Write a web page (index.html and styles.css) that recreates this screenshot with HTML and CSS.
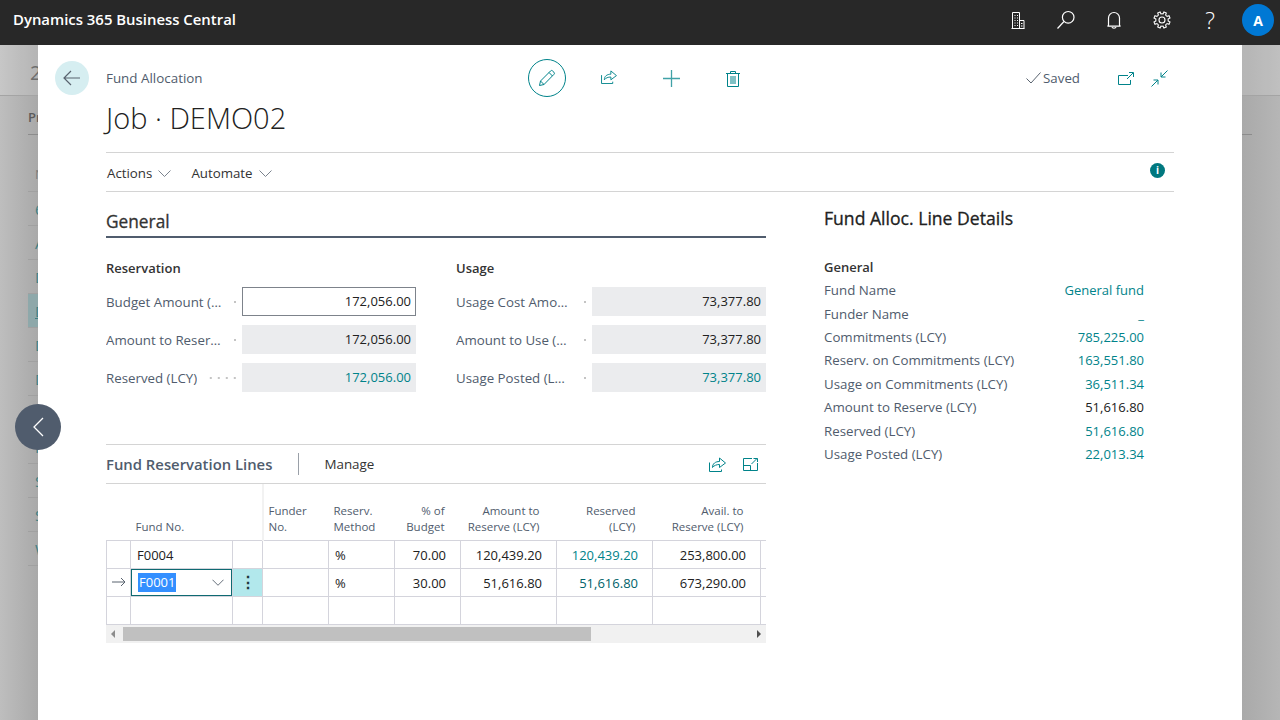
FILE: index.html
```html
<!DOCTYPE html>
<html lang="en">
<head>
<meta charset="utf-8">
<title>Job · DEMO02 - Dynamics 365 Business Central</title>
<link rel="stylesheet" href="styles.css">
</head>
<body>
<header class="topbar">
  <div class="brand">Dynamics 365 Business Central</div>
  <nav class="top-icons">
    <span class="top-btn"><svg width="14" height="17" viewBox="0 0 14 17" fill="none" stroke="#fff"><path d="M1.500 16.500V.5h7v16zM8.500 8.500h4.500v8H8.500M.5 16.500h13"/><path d="M3.500 3.500h1M6 3.500h1M3.500 6h1M6 6h1M3.500 8.500h1M6 8.500h1M3.500 11h1M6 11h1M3.500 13.500h1M6 13.500h1M10 11.500h1.500M10 14h1.500"/></svg></span>
    <span class="top-btn"><svg width="20" height="20" viewBox="0 0 20 20" fill="none" stroke="#fff" stroke-width="1.200"><circle cx="12.200" cy="7.300" r="5.800"/><path d="M8 11.500 1.500 18.500"/></svg></span>
    <span class="top-btn"><svg width="18" height="20" viewBox="0 0 18 20" fill="none" stroke="#fff" stroke-width="1.200"><path d="M3.500 15V8a5.500 5.500 0 0 1 11 0v7c0 .6.5 1 1 1.200H2.500c.5-.2 1-.6 1-1.200zM7 17c.3 1.500 3.700 1.500 4 0"/></svg></span>
    <span class="top-btn"><svg width="20" height="20" viewBox="-10 -10 20 20" fill="none" stroke="#fff" stroke-width="1.100"><defs><path id="gear-tooth" d="M5.730-2.370 6.040-1.390 8.100-1.280V1.280L6.040 1.390 5.730 2.370"/></defs><use href="#gear-tooth" transform="rotate(22.500)"/><use href="#gear-tooth" transform="rotate(67.500)"/><use href="#gear-tooth" transform="rotate(112.500)"/><use href="#gear-tooth" transform="rotate(157.500)"/><use href="#gear-tooth" transform="rotate(202.500)"/><use href="#gear-tooth" transform="rotate(247.500)"/><use href="#gear-tooth" transform="rotate(292.500)"/><use href="#gear-tooth" transform="rotate(337.500)"/><circle r="3"/></svg></span>
    <span class="top-btn help">?</span>
    <span class="avatar">A</span>
  </nav>
</header>

<main class="workspace">
  <div class="backdrop">
    <div class="bg-title">2</div>
    <div class="bg-list">
      <div class="bg-tab">Projects</div>
      <div class="bg-row bg-head">No.</div>
      <div class="bg-row">6000</div>
      <div class="bg-row">AMT</div>
      <div class="bg-row">DEMO</div>
      <div class="bg-row bg-selected">DEMO02</div>
      <div class="bg-row">DEMO03</div>
      <div class="bg-row">DEMO04</div>
      <div class="bg-row">DEMO05</div>
      <div class="bg-row">F1000</div>
      <div class="bg-row">S1000</div>
      <div class="bg-row">S2000</div>
      <div class="bg-row">W1000</div>
    </div>
  </div>

  <section class="dialog">
    <div class="dialog-head">
      <span class="back-btn"><svg width="18" height="16" viewBox="0 0 18 16" fill="none" stroke="#59636f" stroke-width="1.200"><path d="M17 8H1M8 1 1 8l7 7"/></svg></span>
      <span class="caption">Fund Allocation</span>
      <div class="tools">
        <span class="tool tool-edit"><svg width="20" height="20" viewBox="0 0 20 20" fill="none" stroke="#00838a"><path d="M2.500 17.500 3.500 13 13.500 3a1.500 1.500 0 0 1 2.200 0l1.200 1.200a1.500 1.500 0 0 1 0 2.200L7 16.500zM3.500 13 7 16.500M12 4.500 15.500 8"/></svg></span>
        <span class="tool tool-up"><svg width="16" height="14" viewBox="0 0 17 15" fill="none" stroke="#00838a"><path d="M.5 5.500v9h12v-2"/><path d="M3.500 10.500c0-4 3-6 7-6V1l6 5-6 4.500V7.500c-3 0-5.500 1-7 3z" stroke-linejoin="round"/></svg></span>
        <span class="tool"><svg width="17" height="17" viewBox="0 0 17 17" fill="none" stroke="#00838a" stroke-opacity=".75" stroke-width="1.300"><path d="M8.500 0v17M0 8.500h17"/></svg></span>
        <span class="tool"><svg width="14" height="17" viewBox="0 0 14 17" fill="none" stroke="#00838a"><path d="M0 3.500h14M1.500 3.500v13h11v-13M4.500 3.500v-2h5v2M5 6v8M7 6v8M9 6v8"/></svg></span>
      </div>
      <div class="status">
        <span class="saved"><svg width="15" height="12" viewBox="0 0 15 12" fill="none" stroke="#59636f"><path d="M.5 6.500 5 11 14.500.5"/></svg>Saved</span>
        <span class="status-icon"><svg width="16" height="13" viewBox="0 0 16 13" fill="none" stroke="#00838a"><path d="M10 3.500H.500v9h12V8"/><path d="M9 7 15 1M11 .5h4.500V5" stroke-width="1"/></svg></span>
        <span class="status-icon"><svg width="17" height="17" viewBox="0 0 17 17" fill="none" stroke="#00838a"><path d="M16.500.5 10 7M10 2.500V7h4.500M.5 16.500 7 10M2.500 10H7v4.500"/></svg></span>
      </div>
    </div>
    <h1 class="page-title">Job · DEMO02</h1>
    <div class="menu">
      <span class="menu-item">Actions<svg class="chev" width="13" height="7" viewBox="0 0 13 7" fill="none" stroke="#7b838e"><path d="m.5.5 6 6 6-6"/></svg></span>
      <span class="menu-item">Automate<svg class="chev" width="13" height="7" viewBox="0 0 13 7" fill="none" stroke="#7b838e"><path d="m.5.5 6 6 6-6"/></svg></span>
      <span class="info">i</span>
    </div>

    <div class="content">
      <div class="main-col">
        <h2 class="section-title">General</h2>
        <div class="field-groups">
          <div class="field-group">
            <h3 class="group-title">Reservation</h3>
            <div class="field"><span class="f-label"><span class="f-text">Budget Amount (LCY)</span><i class="leader"></i></span><span class="f-value f-input">172,056.00</span></div>
            <div class="field"><span class="f-label"><span class="f-text">Amount to Reserve (LCY)</span><i class="leader"></i></span><span class="f-value">172,056.00</span></div>
            <div class="field"><span class="f-label"><span class="f-text">Reserved (LCY)</span><i class="leader"></i></span><span class="f-value link">172,056.00</span></div>
          </div>
          <div class="field-group">
            <h3 class="group-title">Usage</h3>
            <div class="field"><span class="f-label"><span class="f-text">Usage Cost Amount (LCY)</span><i class="leader"></i></span><span class="f-value">73,377.80</span></div>
            <div class="field"><span class="f-label"><span class="f-text">Amount to Use (LCY)</span><i class="leader"></i></span><span class="f-value">73,377.80</span></div>
            <div class="field"><span class="f-label"><span class="f-text">Usage Posted (LCY)</span><i class="leader"></i></span><span class="f-value link">73,377.80</span></div>
          </div>
        </div>

        <div class="lines">
          <div class="lines-head">
            <span class="lines-title">Fund Reservation Lines</span>
            <span class="lines-manage">Manage</span>
            <span class="lines-icons">
              <svg width="17" height="15" viewBox="0 0 17 15" fill="none" stroke="#00838a"><path d="M.5 5.500v9h12v-2"/><path d="M3.500 10.500c0-4 3-6 7-6V1l6 5-6 4.500V7.500c-3 0-5.500 1-7 3z" stroke-linejoin="round"/></svg>
              <svg width="15" height="13" viewBox="0 0 15 13" fill="none" stroke="#00838a"><path d="M9 .5H.5v12h14V5M.5 7.500h7v5M8.500 6 14 .5M10.500.5h4V4"/></svg>
            </span>
          </div>
          <table class="grid">
            <colgroup>
              <col class="c-mark"><col class="c-fund"><col class="c-menu"><col class="c-narrow"><col class="c-narrow"><col class="c-narrow"><col class="c-amt"><col class="c-amt"><col class="c-avail"><col>
            </colgroup>
            <thead>
              <tr>
                <th></th><th class="th-left">Fund No.</th><th class="th-sep"></th>
                <th class="th-left">Funder<br>No.</th><th class="th-left">Reserv.<br>Method</th>
                <th>% of<br>Budget</th><th>Amount to<br>Reserve (LCY)</th><th>Reserved<br>(LCY)</th><th>Avail. to<br>Reserve (LCY)</th><th class="th-end"></th>
              </tr>
            </thead>
            <tbody>
              <tr><td></td><td class="left">F0004</td><td></td><td></td><td class="left">%</td><td>70.00</td><td>120,439.20</td><td class="link">120,439.20</td><td>253,800.00</td><td></td></tr>
              <tr>
                <td class="mark"><svg width="14" height="10" viewBox="0 0 14 10" fill="none" stroke="#59636f"><path d="M0 5h13M9 1l4 4-4 4"/></svg></td>
                <td class="active"><span class="combo"><span class="selected-text">F0001</span><svg width="12" height="7" viewBox="0 0 13 7" fill="none" stroke="#59636f"><path d="m.5.5 6 6 6-6"/></svg></span></td>
                <td class="row-menu">⋮</td><td></td><td class="left">%</td><td>30.00</td><td>51,616.80</td><td class="link-dark">51,616.80</td><td>673,290.00</td><td></td>
              </tr>
              <tr><td></td><td></td><td></td><td></td><td></td><td></td><td></td><td></td><td></td><td></td></tr>
            </tbody>
          </table>
          <div class="scrollbar">
            <span class="sb-arrow sb-left"></span>
            <span class="sb-track"><span class="sb-thumb"></span></span>
            <span class="sb-arrow sb-right"></span>
          </div>
        </div>
      </div>

      <aside class="side-col">
        <h2 class="side-title">Fund Alloc. Line Details</h2>
        <h3 class="side-group">General</h3>
        <dl class="facts">
          <div class="fact"><dt>Fund Name</dt><dd class="link">General fund</dd></div>
          <div class="fact"><dt>Funder Name</dt><dd class="link">_</dd></div>
          <div class="fact"><dt>Commitments (LCY)</dt><dd class="link">785,225.00</dd></div>
          <div class="fact"><dt>Reserv. on Commitments (LCY)</dt><dd class="link">163,551.80</dd></div>
          <div class="fact"><dt>Usage on Commitments (LCY)</dt><dd class="link">36,511.34</dd></div>
          <div class="fact"><dt>Amount to Reserve (LCY)</dt><dd>51,616.80</dd></div>
          <div class="fact"><dt>Reserved (LCY)</dt><dd class="link">51,616.80</dd></div>
          <div class="fact"><dt>Usage Posted (LCY)</dt><dd class="link">22,013.34</dd></div>
        </dl>
      </aside>
    </div>
  </section>

  <span class="panel-toggle"><svg width="12" height="20" viewBox="0 0 12 20" fill="none" stroke="#fff" stroke-width="1.300"><path d="M11 1 2 10l9 9"/></svg></span>
</main>
</body>
</html>
```
FILE: styles.css
```css
* { box-sizing: border-box; }
html, body { height: 100%; }
body {
  margin: 0;
  width: 1280px;
  height: 720px;
  overflow: hidden;
  display: flex;
  flex-direction: column;
  font-family: "Open Sans", "Noto Sans", sans-serif;
  font-size: 13px;
  color: #212121;
  background: #fff;
}
h1, h2, h3, dl, dd { margin: 0; font-weight: normal; }

/* top bar */
.topbar {
  flex: none;
  height: 45px;
  background: #282828;
  color: #fff;
  display: flex;
  align-items: center;
  justify-content: space-between;
  padding: 0 6px 5px 13px;
}
.brand { font-size: 14.900px; font-weight: 600; line-height: 38px; height: 40px; }
.top-icons { display: flex; align-items: center; height: 40px; }
.top-btn { width: 48px; height: 40px; display: flex; align-items: center; justify-content: center; }
.help { font-size: 23px; font-weight: 300; }
.avatar {
  width: 32px; height: 32px; margin-left: 8px; border-radius: 50%;
  background: #0078d4; color: #fff; font-weight: 700; font-size: 14px;
  display: flex; align-items: center; justify-content: center;
}

/* page behind the dialog */
.workspace { flex: 1; position: relative; overflow: hidden; }
.backdrop {
  height: 100%;
  background: linear-gradient(90deg, #bebebe 0, #a9a9a9 38px, #a9a9a9 1242px, #b6b6b6 1280px);
  color: #5b5b5b;
}
.bg-title {
  height: 51px; padding-left: 30px; font-size: 20px; line-height: 55px; color: #6e6e6e;
  background: rgba(255, 255, 255, .14);
  border-bottom: 1px solid #a4a4a4;
}
.bg-list { margin: 0 28px; }
.bg-tab { height: 39px; line-height: 42px; font-weight: 600; font-size: 13px; border-bottom: 1px solid #8c8c8c; }
.bg-row { width: 500px; height: 34px; padding-left: 7px; line-height: 35px; color: #3f7f83; border-bottom: 1px solid #a0a0a0; font-size: 15px; }
.bg-head { height: 57px; padding-top: 22px; line-height: 34px; color: #7d7d7d; font-size: 13px; }
.bg-selected { background: #8ea8aa; text-decoration: underline; }

/* dialog */
.dialog {
  position: absolute;
  top: 0; bottom: 0; left: 38px; right: 38px;
  background: #fff;
  padding: 14px 68px 0;
}
.dialog-head { display: flex; align-items: center; height: 38px; margin-left: -51px; }
.back-btn {
  flex: none; width: 34px; height: 34px; margin-right: 17px; border-radius: 50%;
  background: #d6eef1;
  display: flex; align-items: center; justify-content: center;
}
.caption { flex: none; width: 422px; color: #505c6d; font-size: 13.400px; }
.tools { display: flex; gap: 24px; }
.tool { width: 38px; height: 38px; display: flex; align-items: center; justify-content: center; }
.tool-edit { border: 1px solid #00838a; border-radius: 50%; }
.tool-up { padding-bottom: 2px; }
.status { margin-left: auto; display: flex; align-items: center; padding-right: 6px; }
.saved { display: flex; align-items: center; gap: 2px; color: #505c6d; margin-right: 38px; font-size: 13.300px; }
.status-icon { display: flex; }
.status-icon + .status-icon { margin-left: 17px; }
.page-title { margin-top: 2px; height: 39px; font-size: 29px; line-height: 38px; font-weight: 300; color: #212121; }

.menu {
  margin-top: 14px; height: 40px;
  border-top: 1px solid #d4d4d4; border-bottom: 1px solid #d4d4d4;
  display: flex; align-items: center; gap: 20px; padding: 2px 0 0 1px;
  color: #333; font-size: 13.300px;
}
.menu-item { display: flex; align-items: center; gap: 6px; }
.info {
  margin-left: auto; margin-top: -5px; margin-right: 9px;
  width: 15px; height: 15px; border-radius: 50%;
  background: #00787f; color: #fff; font-size: 10px; font-weight: 700; line-height: 15px; text-align: center;
}

.content { display: flex; gap: 58px; }
.main-col { flex: none; width: 660px; }
.section-title {
  padding-top: 17px; height: 46px; line-height: 26px;
  font-size: 17.300px; font-weight: 400; color: #333; -webkit-text-stroke: .3px #333;
  border-bottom: 2px solid #505c6d;
}
.field-groups { display: flex; gap: 40px; margin-top: 21px; }
.field-group { flex: 1; min-width: 0; display: flex; flex-direction: column; gap: 9px; }
.group-title { font-size: 13px; font-weight: 600; line-height: 18px; color: #333; margin-bottom: 1px; }
.field { display: flex; height: 29px; align-items: center; }
.f-label { flex: none; width: 136px; display: flex; align-items: center; color: #505c6d; font-size: 13.300px; }
.f-text { max-width: 115.500px; white-space: nowrap; overflow: hidden; text-overflow: ellipsis; }
.leader {
  flex: 1; height: 2px; margin: 0 6px 0 8px;
  background: linear-gradient(90deg, transparent 6px, #c4c4c4 6px) right center / 8px 2px repeat-x;
}
.f-value {
  flex: 1; height: 29px; line-height: 29px; padding: 0 5px; text-align: right;
  background: #ebecee;
}
.f-input { background: #fff; border: 1px solid #7d838b; line-height: 27px; padding: 0 4px; }
.link { color: #00838a; }
.link-dark { color: #00626a; }

.lines { margin-top: 52px; border-top: 1px solid #d4d4d4; }
.lines-head {
  height: 39px; display: flex; align-items: center; border-bottom: 1px solid #d4d4d4;
}
.lines-title { font-size: 14.850px; font-weight: 600; color: #505c6d; padding-right: 26px; border-right: 1px solid #9aa0a8; line-height: 22px; }
.lines-manage { margin-left: 25px; color: #333; font-size: 13.400px; }
.lines-icons { margin-left: auto; display: flex; align-items: center; gap: 17px; padding-right: 8px; }

.grid { width: 660px; table-layout: fixed; border-collapse: collapse; font-size: 13px; }
.c-mark { width: 24px; }
.c-fund { width: 102px; }
.c-menu { width: 30px; }
.c-narrow { width: 66px; }
.c-amt { width: 96px; }
.c-avail { width: 108px; }
.grid th {
  height: 56px; padding: 0 17px 5px 5px; vertical-align: bottom; text-align: right;
  font-weight: 400; font-size: 11.500px; line-height: 16px; color: #505c6d;
  border-bottom: 1px solid #d4d4dc;
}
.grid th.th-left { text-align: left; }
.grid th.th-sep { border-right: 2px solid #f2f2f2; }
.grid th:nth-child(6) { padding-right: 16px; }
.grid td {
  height: 28px; padding: 1px 14px 0 6px; text-align: right;
  border: 1px solid #d4d4dc;
  white-space: nowrap;
}
.grid td:last-child { border-right: 0; }
.grid td.left { text-align: left; }
.grid td.mark { padding: 0; text-align: center; }
.grid td.mark svg { display: block; margin: 0 auto; }
.grid td.active { padding: 0; }
.combo {
  display: flex; align-items: center; justify-content: space-between;
  height: 27px; padding: 0 7px 0 6px; border: 1px solid #0e6a72;
}
.selected-text { background: #338fff; color: #fff; line-height: 19px; padding: 0 1px; }
.grid td.row-menu { background: #b2e8ec; padding: 0; text-align: center; font-size: 16px; font-weight: 700; color: #1d3a3e; }

.scrollbar { height: 18px; display: flex; align-items: center; background: #f1f1f1; margin-top: 0; }
.sb-arrow { flex: none; width: 0; height: 0; border-style: solid; border-width: 4px 0; border-color: transparent; }
.sb-left { margin: 0 5px 0 5px; border-right: 4px solid #8c8c8c; }
.sb-right { margin: 0 5px 0 5px; border-left: 4px solid #505050; }
.sb-track { flex: 1; height: 14px; display: flex; margin-left: 3px; }
.sb-thumb { width: 468px; background: #c0c0c0; }

.side-col { flex: none; width: 320px; }
.side-title { margin-top: 13px; line-height: 26px; font-size: 17.600px; font-weight: 400; color: #212121; -webkit-text-stroke: .3px #212121; }
.side-group { margin-top: 27px; font-size: 13px; font-weight: 600; line-height: 18px; color: #333; }
.facts { margin-top: 3.300px; }
.fact { display: flex; justify-content: space-between; height: 23.400px; line-height: 23.400px; }
.fact dt { color: #505c6d; font-size: 13.300px; }
.panel-toggle {
  position: absolute; left: 15px; top: 359px; width: 46px; height: 46px; border-radius: 50%;
  background: #505c6d;
  display: flex; align-items: center; justify-content: center;
}
```
